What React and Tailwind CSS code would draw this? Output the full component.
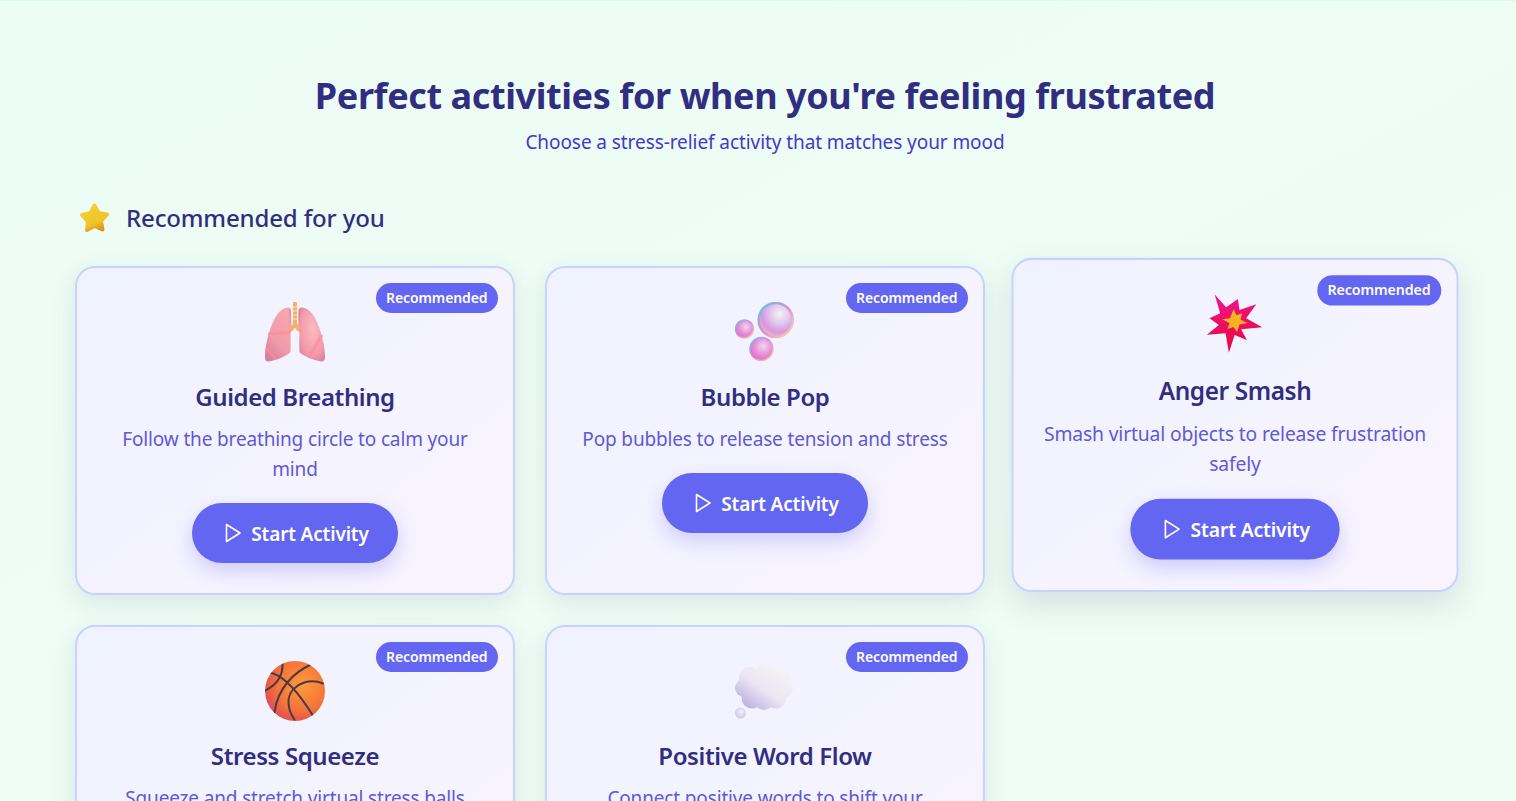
const font = "font-['Noto_Sans','Open_Sans',sans-serif]";

function StarIcon() {
    return (
        <svg viewBox="0 0 32 32" className="h-8 w-8">
            <defs>
                <linearGradient id="star" x1="0.3" y1="0" x2="0.7" y2="1">
                    <stop offset="0" stopColor="#f7cf3a" />
                    <stop offset="0.7" stopColor="#f0c326" />
                    <stop offset="1" stopColor="#d8961c" />
                </linearGradient>
            </defs>
            <path
                d="M15.5 3.5 L19.5 11 L28 12.5 L22 19 L23.5 27.5 L15.5 24 L8 28 L9 19.5 L3 13 L11.5 11 Z"
                fill="url(#star)"
                stroke="url(#star)"
                strokeWidth="4"
                strokeLinejoin="round"
            />
        </svg>
    );
}

function LungsIcon() {
    return (
        <svg viewBox="0 0 60 60" className="h-[60px] w-[60px]">
            <defs>
                <linearGradient id="lungL" x1="0.7" y1="0" x2="0.2" y2="1">
                    <stop offset="0" stopColor="#f8a6b0" />
                    <stop offset="0.6" stopColor="#f09bab" />
                    <stop offset="1" stopColor="#d87c9b" />
                </linearGradient>
                <radialGradient id="lungR" cx="0.55" cy="0.4" r="0.7">
                    <stop offset="0" stopColor="#fbbcc3" />
                    <stop offset="0.7" stopColor="#f29aaa" />
                    <stop offset="1" stopColor="#dc7f9c" />
                </radialGradient>
            </defs>
            <path d="M24 5.5 C26 6 26.5 9 26 14 L25.5 24 C25.5 32 26 42 25.5 50 C21 54.5 12 58 4 59.5 C1 60 0 58 0 55 C0 43 4 28 9 18 C12 11 18 5 24 5.5 Z" fill="url(#lungL)" />
            <path d="M36 5.5 C34 6 33.5 9 34 14 L34.5 24 C34.5 32 34 42 34.5 50 C39 54.5 48 58 56 59.5 C59 60 60 58 60 55 C60 43 56 28 51 18 C48 11 42 5 36 5.5 Z" fill="url(#lungR)" />
            <path d="M3 32 L25.5 30.5 M1 46 L11 57 M57 33 L44 55" stroke="#f98c9a" strokeWidth="3" fill="none" opacity="0.7" />
            <path d="M24.5 7 C26 14 25.5 22 25.5 30" stroke="#c9758a" strokeWidth="1.5" fill="none" opacity="0.5" />
            <path d="M34.5 7 C33.5 14 34 22 34.5 30" stroke="#c9758a" strokeWidth="2" fill="none" opacity="0.5" />
            <path d="M30 1.5 V22 M30 22 L26.5 27 M30 22 L33.5 27" stroke="#f8b163" strokeWidth="4" strokeLinecap="round" fill="none" />
            <path d="M28 5 H32 M28 9 H32 M28 13 H32 M28 17 H32" stroke="#fcd49c" strokeWidth="1.3" />
        </svg>
    );
}

function BubblesIcon() {
    return (
        <svg viewBox="0 0 60 60" className="h-[60px] w-[60px]">
            <defs>
                <radialGradient id="bub1" cx="0.62" cy="0.32" r="0.72">
                    <stop offset="0" stopColor="#f6f3f2" />
                    <stop offset="0.4" stopColor="#e0c8ee" />
                    <stop offset="0.75" stopColor="#d894e2" />
                    <stop offset="1" stopColor="#eec4a8" />
                </radialGradient>
                <linearGradient id="bubEdge" x1="0" y1="0" x2="1" y2="1">
                    <stop offset="0" stopColor="#4fd0e6" />
                    <stop offset="0.5" stopColor="#e088dc" />
                    <stop offset="1" stopColor="#f7e09a" />
                </linearGradient>
                <radialGradient id="bub2" cx="0.58" cy="0.38" r="0.62">
                    <stop offset="0" stopColor="#f2d6ec" />
                    <stop offset="0.65" stopColor="#e58bd8" />
                    <stop offset="1" stopColor="#e46fcb" />
                </radialGradient>
            </defs>
            <circle cx="40.7" cy="18" r="17" fill="url(#bub1)" stroke="url(#bubEdge)" strokeWidth="2.5" />
            <circle cx="9.5" cy="27" r="9" fill="url(#bub2)" stroke="url(#bubEdge)" strokeWidth="1.5" />
            <circle cx="26.5" cy="47" r="11.5" fill="url(#bub2)" stroke="url(#bubEdge)" strokeWidth="1.5" />
        </svg>
    );
}

function BurstIcon() {
    return (
        <svg viewBox="0 0 60 60" className="h-[60px] w-[60px]">
            <defs>
                <linearGradient id="burst" x1="0.4" y1="0" x2="0.5" y2="1">
                    <stop offset="0" stopColor="#f0148a" />
                    <stop offset="1" stopColor="#e8083a" />
                </linearGradient>
            </defs>
            <polygon
                points="10,0 21.3,12.6 32.8,4.4 34.5,15.3 50.9,9.7 41,23.5 56.8,32.3 36,34.3 41.7,44.8 29.6,39.9 24,57.3 20.7,38.2 2.3,39.6 14.1,30 4.9,23.5 15.4,18.6"
                fill="url(#burst)"
            />
            <polygon
                points="28.6,14.6 31.5,20.5 37,18.5 35.5,25 42.5,28 34.5,29.5 32,37 28.5,32 22.5,34 24.5,28 17.5,24.5 25,23.5"
                fill="#fbb321"
            />
        </svg>
    );
}

function BallIcon() {
    return (
        <svg viewBox="0 0 60 60" className="h-[60px] w-[60px]">
            <defs>
                <radialGradient id="ball" cx="0.62" cy="0.4" r="0.7">
                    <stop offset="0" stopColor="#ff9a3c" />
                    <stop offset="0.6" stopColor="#f4743a" />
                    <stop offset="0.88" stopColor="#e4544c" />
                    <stop offset="1" stopColor="#d84a86" />
                </radialGradient>
                <clipPath id="ballClip">
                    <circle cx="30" cy="30" r="30" />
                </clipPath>
            </defs>
            <circle cx="30" cy="30" r="30" fill="url(#ball)" />
            <g clipPath="url(#ballClip)" stroke="#4a3a44" strokeWidth="2" fill="none" strokeLinecap="round">
                <path d="M17.5 3 C18 12 14 23 0 29.5" />
                <path d="M6 11.7 C22 16 38 38 50 58" />
                <path d="M45 4 C30 11 13 26 9.5 51" />
                <path d="M58.3 22.5 C40 15 22 28 23.5 42 C24 49 26 54 29.5 58.5" />
            </g>
        </svg>
    );
}

function ThoughtIcon() {
    return (
        <svg viewBox="0 0 60 60" className="h-[60px] w-[60px]">
            <defs>
                <linearGradient id="cloud" gradientUnits="userSpaceOnUse" x1="44" y1="8" x2="14" y2="50">
                    <stop offset="0" stopColor="#f5f2f6" />
                    <stop offset="0.5" stopColor="#ebe6f2" />
                    <stop offset="1" stopColor="#b9aee0" />
                </linearGradient>
                <radialGradient id="puff" cx="0.55" cy="0.4" r="0.6">
                    <stop offset="0" stopColor="#f3f0f8" />
                    <stop offset="1" stopColor="#cfc6ea" />
                </radialGradient>
            </defs>
            <g fill="url(#cloud)">
                <circle cx="15" cy="17" r="11" />
                <circle cx="30" cy="13" r="10" />
                <circle cx="44" cy="16" r="11" />
                <circle cx="49" cy="27" r="9.5" />
                <circle cx="41" cy="37" r="10.5" />
                <circle cx="29" cy="39" r="10" />
                <circle cx="17" cy="37" r="10.5" />
                <circle cx="9" cy="27" r="9" />
                <circle cx="29" cy="26" r="18" />
            </g>
            <circle cx="5.5" cy="52" r="5.5" fill="url(#puff)" />
        </svg>
    );
}

function PlayIcon() {
    return (
        <svg viewBox="0 0 24 24" className="h-6 w-6" fill="none" stroke="currentColor" strokeWidth="1.6" strokeLinejoin="round">
            <polygon points="5.5,3.5 19,12 5.5,20.5" />
        </svg>
    );
}

function ActivityCard({ icon, title, desc, hovered }) {
    return (
        <div
            className={`relative flex flex-col items-center rounded-[20px] border-2 border-[#c7d2fe] bg-gradient-to-br from-[#eff3ff] to-[#f9f4ff] px-7 pt-[34px] pb-[30px] text-center ${
                hovered ? "-translate-y-[5.5px] scale-[1.016] shadow-[0_12px_30px_rgba(60,70,120,0.15)]" : "shadow-[0_8px_25px_rgba(60,70,120,0.12)]"
            }`}
        >
            <span className="absolute top-[15px] right-[15px] rounded-full bg-[#6366f1] px-[10.5px] py-[5px] text-[14px] leading-5 font-semibold tracking-[-0.1px] whitespace-nowrap text-white">
                Recommended
            </span>
            {icon}
            <h3 className="mt-[18px] text-[24px] leading-[34px] font-semibold tracking-[-0.4px] text-[#312e81]">{title}</h3>
            <p className="mt-[10px] text-[19px] leading-[30px] tracking-[-0.15px] text-[#6058d8]">{desc}</p>
            <button className="mt-[19px] flex h-[60px] w-[206px] items-center justify-center gap-1.5 rounded-full bg-[#6366f1] text-[19px] leading-[28px] font-semibold tracking-[-0.15px] text-white shadow-[0_8px_20px_rgba(99,102,241,0.28)]">
                <PlayIcon />
                <span className="pt-0.5">Start Activity</span>
            </button>
        </div>
    );
}

const activities = [
    { title: "Guided Breathing", desc: "Follow the breathing circle to calm your mind", icon: <LungsIcon /> },
    { title: "Bubble Pop", desc: "Pop bubbles to release tension and stress", icon: <BubblesIcon /> },
    { title: "Anger Smash", desc: "Smash virtual objects to release frustration safely", icon: <BurstIcon />, hovered: true },
    { title: "Stress Squeeze", desc: "Squeeze and stretch virtual stress balls", icon: <BallIcon /> },
    { title: "Positive Word Flow", desc: "Connect positive words to shift your mindset", icon: <ThoughtIcon /> },
];

export default function App() {
    return (
        <div className={`h-[801px] overflow-hidden border-t border-[#dcfce7] bg-gradient-to-br from-[#ecfdf5] to-[#f0fdf4] ${font}`}>
            <div className="ml-[75px] w-[1380px] pt-[69px]">
                {/* Header */}
                <h1 className="text-center text-[36px] leading-[52px] font-bold tracking-[-0.4px] text-[#312e81]">
                    Perfect activities for when you're feeling frustrated
                </h1>
                <p className="mt-[4px] text-center text-[19px] leading-[32px] tracking-[-0.08px] text-[#4338ca]">
                    Choose a stress-relief activity that matches your mood
                </p>

                {/* Section title */}
                <div className="mt-[43px] flex items-center gap-[15px] pl-1">
                    <StarIcon />
                    <h2 className="text-[24px] leading-[34px] font-medium tracking-[-0.15px] text-[#312e81]">Recommended for you</h2>
                </div>

                {/* Cards */}
                <div className="mt-[31px] grid grid-cols-3 gap-x-[30px] gap-y-[30px]">
                    {activities.map((a) => (
                        <ActivityCard key={a.title} {...a} />
                    ))}
                </div>
            </div>
        </div>
    );
}
